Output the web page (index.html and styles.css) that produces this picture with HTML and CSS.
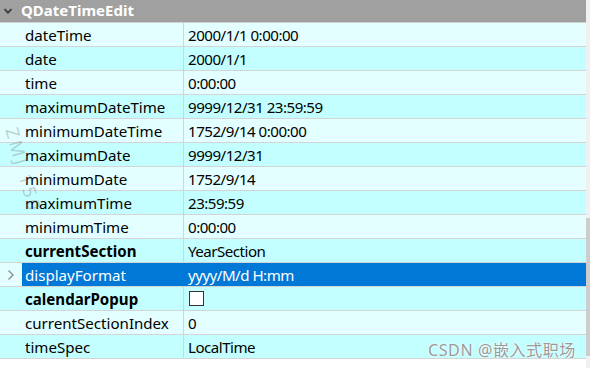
FILE: index.html
```html
<!doctype html>
<html lang="en">
<head>
  <meta charset="utf-8"/>
  <title>Property Editor</title>
  <link rel="stylesheet" href="styles.css">
</head>
<body>
<div class="editor">
  <div class="sheet">
    <div class="group">
      <svg class="caret" width="10" height="10" viewBox="0 0 10 10"><path d="M1.5 3.2 L5 6.7 L8.5 3.2" fill="none" stroke="#3a3a3a" stroke-width="1.8"/></svg>
      <span>QDateTimeEdit</span>
    </div>
    <div class="row light"><div class="gut"></div><div class="name">dateTime</div><div class="val">2000/1/1 0:00:00</div></div>
    <div class="row dark"><div class="gut"></div><div class="name">date</div><div class="val">2000/1/1</div></div>
    <div class="row light"><div class="gut"></div><div class="name">time</div><div class="val">0:00:00</div></div>
    <div class="row dark"><div class="gut"></div><div class="name">maximumDateTime</div><div class="val">9999/12/31 23:59:59</div></div>
    <div class="row light"><div class="gut"></div><div class="name">minimumDateTime</div><div class="val">1752/9/14 0:00:00</div></div>
    <div class="row dark"><div class="gut"></div><div class="name">maximumDate</div><div class="val">9999/12/31</div></div>
    <div class="row light"><div class="gut"></div><div class="name">minimumDate</div><div class="val">1752/9/14</div></div>
    <div class="row dark"><div class="gut"></div><div class="name">maximumTime</div><div class="val">23:59:59</div></div>
    <div class="row light"><div class="gut"></div><div class="name">minimumTime</div><div class="val">0:00:00</div></div>
    <div class="row dark"><div class="gut"></div><div class="name bold">currentSection</div><div class="val">YearSection</div></div>
    <div class="row light selected">
      <div class="gut"><svg width="8" height="12" viewBox="0 0 8 12"><path d="M1.5 1.5 L6 6 L1.5 10.5" fill="none" stroke="#9a9a9a" stroke-width="1.6"/></svg></div>
      <div class="name">displayFormat</div><div class="val">yyyy/M/d H:mm</div>
    </div>
    <div class="row dark"><div class="gut"></div><div class="name bold">calendarPopup</div><div class="val"><span class="check"></span></div></div>
    <div class="row light"><div class="gut"></div><div class="name">currentSectionIndex</div><div class="val">0</div></div>
    <div class="row dark"><div class="gut"></div><div class="name">timeSpec</div><div class="val">LocalTime</div></div>
  </div>
  <div class="scrollbar"><div class="thumb"></div></div>
  <div class="mark-left">ZMJ 150</div>
  <div class="mark-csdn">CSDN @嵌入式职场</div>
</div>
</body>
</html>
```
FILE: styles.css
```css
body{margin:0;background:#fff;font-family:"Noto Sans","Noto Sans CJK SC",sans-serif;}
.editor{position:relative;display:flex;width:590px;height:368px;overflow:hidden;}
.sheet{width:586px;}
.group{display:flex;align-items:center;gap:8px;padding-left:3px;height:23px;box-sizing:border-box;
  background:#a0a0a0;color:#fff;font-weight:700;font-size:15px;border-bottom:1px solid #d0d0d0}
.group span{margin-top:-2px}
.caret{margin-top:-1px}
.row{display:flex;height:24px;box-sizing:border-box;border-bottom:1px solid #d4d4d4;
  font-size:15.1px;color:#000;line-height:24px}
.light{background:#e3ffff}
.dark{background:#c4ffff}
.gut{width:22px;flex:none;display:flex;align-items:center;justify-content:center}
.name{width:162px;flex:none;padding-left:3px;box-sizing:border-box;border-right:1px solid #d4d4d4;white-space:nowrap}
.val{flex:1;padding-left:4px;white-space:nowrap;display:flex;align-items:center;letter-spacing:-0.5px}
.bold{font-weight:700}
.selected .name,.selected .val{background:#0078d7;color:#fff}
.selected .name{border-right-color:#0078d7}
.check{width:13px;height:13px;border:1px solid #333;background:#fff;display:inline-block;margin-left:1px}
.scrollbar{width:4px;background:#f0f0f0;display:flex;flex-direction:column}
.thumb{margin-top:218px;height:138px;background:#cdcdcd}
.mark-left{position:absolute;left:13px;top:126px;writing-mode:vertical-rl;transform:rotate(-16deg);
  font-size:18px;line-height:22px;color:rgba(110,110,110,.32);letter-spacing:3px;white-space:nowrap}
.mark-csdn{position:absolute;left:428px;top:337px;font-size:16px;color:#9a9a9a;letter-spacing:.6px;
  text-shadow:0 0 2px #fff,0 0 1px #fff;white-space:nowrap}
```
